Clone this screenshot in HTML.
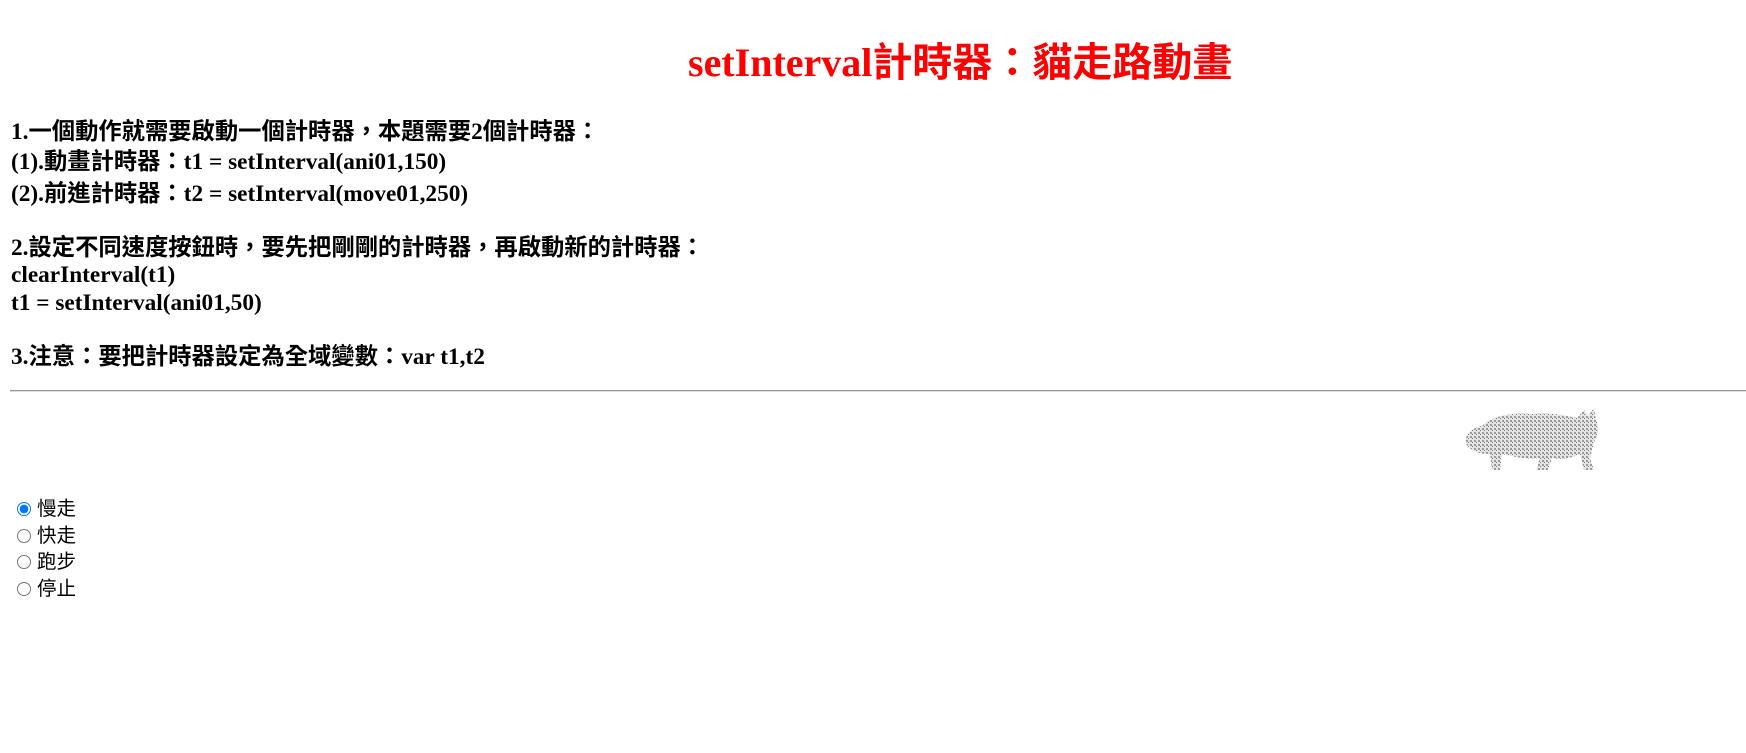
<!DOCTYPE html>
<html><head><meta charset="utf-8">
<style>
html,body{margin:0;padding:0;background:#fff;width:1746px;height:753px;overflow:hidden;position:relative}
.t{position:absolute;left:11px;font-family:"Liberation Serif","Noto Sans CJK TC",sans-serif;font-weight:bold;font-size:23.3px;line-height:30px;white-space:nowrap;color:#000}
h1{position:absolute;margin:0;left:688px;top:40px;font-family:"Liberation Serif","Noto Sans CJK TC",sans-serif;font-weight:bold;font-size:40px;line-height:46px;color:#f00;white-space:nowrap}
hr{position:absolute;left:10px;top:390px;width:1736px;margin:0;border:0;border-top:1px solid #999;border-bottom:1px solid #ddd;height:0}
.r{position:absolute;left:17px;font-family:"Liberation Sans","Noto Sans CJK TC",sans-serif;font-size:19.5px;line-height:26px;white-space:nowrap;color:#000}
.c{display:inline-block;width:12px;height:12px;border:1.5px solid #767676;border-radius:50%;vertical-align:-1px;margin-right:6px;box-sizing:content-box;background:#fff}
.c.on{border:1.5px solid #0075ff;width:12px;height:12px;background:radial-gradient(circle,#0075ff 0 4px,#fff 4.6px)}
</style></head><body>
<h1>setInterval計時器：貓走路動畫</h1>
<div class="t" style="top:117px">1.一個動作就需要啟動一個計時器，本題需要2個計時器：</div>
<div class="t" style="top:147px">(1).動畫計時器：t1 = setInterval(ani01,150)</div>
<div class="t" style="top:179px">(2).前進計時器：t2 = setInterval(move01,250)</div>
<div class="t" style="top:233px">2.設定不同速度按鈕時，要先把剛剛的計時器，再啟動新的計時器：</div>
<div class="t" style="top:260px">clearInterval(t1)</div>
<div class="t" style="top:288px">t1 = setInterval(ani01,50)</div>
<div class="t" style="top:342px">3.注意：要把計時器設定為全域變數：var t1,t2</div>
<hr>
<svg style="position:absolute;left:1462px;top:404px" width="140" height="70" viewBox="0 0 140 70">
<defs><pattern id="p" width="4" height="4" patternUnits="userSpaceOnUse"><rect width="4" height="4" fill="#e4e4e4"/><rect width="2" height="2" fill="#9a9a9a"/><rect x="2" y="2" width="1" height="1" fill="#777"/></pattern></defs>
<path d="M4 40 C2 30 10 24 20 22 C30 12 50 8 70 10 C90 8 105 12 115 14 L122 6 L126 12 L132 4 L134 16 C138 24 136 32 132 38 L128 54 L132 66 L122 66 L118 50 C110 54 100 56 90 54 L86 66 L74 66 L78 54 C62 56 50 52 40 50 L38 66 L30 66 L28 50 C18 50 10 48 4 40 Z" fill="url(#p)"/>
</svg>
<div class="r" style="top:496px"><span class="c on"></span>慢走</div>
<div class="r" style="top:523px"><span class="c"></span>快走</div>
<div class="r" style="top:549px"><span class="c"></span>跑步</div>
<div class="r" style="top:576px"><span class="c"></span>停止</div>
</body></html>
